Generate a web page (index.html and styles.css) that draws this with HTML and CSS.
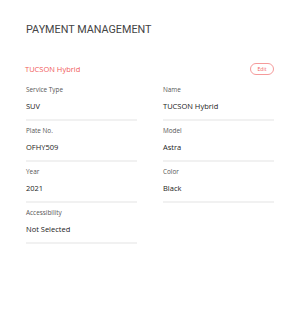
FILE: index.html
```html
<!DOCTYPE html>
<html>
<head>
<meta charset="utf-8">
<link rel="stylesheet" href="styles.css">
</head>
<body>
<div class="page">
  <h1 class="title">PAYMENT MANAGEMENT</h1>
  <div class="head">
    <span class="car">TUCSON Hybrid</span>
    <button class="edit">Edit</button>
  </div>
  <div class="grid">
    <div class="field"><div class="label">Service Type</div><div class="value">SUV</div></div>
    <div class="field"><div class="label">Name</div><div class="value">TUCSON Hybrid</div></div>
    <div class="field"><div class="label">Plate No.</div><div class="value">OFHY509</div></div>
    <div class="field"><div class="label">Model</div><div class="value">Astra</div></div>
    <div class="field"><div class="label">Year</div><div class="value">2021</div></div>
    <div class="field"><div class="label">Color</div><div class="value">Black</div></div>
    <div class="field"><div class="label">Accessibility</div><div class="value">Not Selected</div></div>
  </div>
</div>
</body>
</html>
```
FILE: styles.css
```css
html, body { margin: 0; padding: 0; background: #fff; }
body { font-family: "Open Sans", "Liberation Sans", sans-serif; }
.page { padding: 22px 26px 0 26px; }
.title {
  margin: 0;
  font-family: Roboto, "Liberation Sans", Arial, sans-serif;
  font-weight: 400;
  font-size: 10.8px;
  line-height: 16px;
  color: #444;
}
.head {
  margin-top: 25px;
  height: 12px;
  display: flex;
  align-items: center;
  justify-content: space-between;
}
.car { color: #f15b5b; font-size: 7.5px; line-height: 12px; margin-left: -1px; }
.edit {
  width: 24px; height: 12px; padding: 0;
  border: 1px solid #f59a9a; border-radius: 7px; background: #fff;
  color: #f15b5b; font-family: inherit; font-size: 5px; line-height: 10px;
}
.grid {
  margin-top: 5px;
  display: grid;
  grid-template-columns: 111px 111px;
  column-gap: 26px;
}
.field {
  padding: 5px 0 7px 0;
  border-bottom: 2px solid #f1f1f1;
}
.label { font-size: 6.4px; line-height: 10px; color: #555; }
.value { margin-top: 5px; font-size: 7.5px; line-height: 12px; color: #222; }
```
